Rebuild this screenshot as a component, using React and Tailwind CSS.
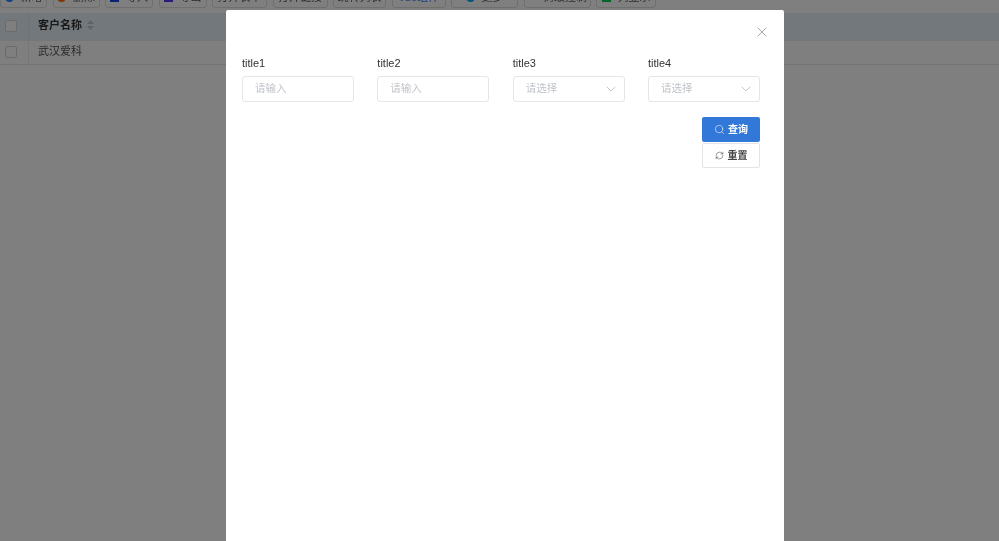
import React from "react";
import { Search, RefreshCw, ChevronDown, X } from "lucide-react";

const F = "[font-family:'Liberation_Sans','Noto_Sans_CJK_SC',sans-serif]";

function Tool({ icon, label, w, text = "text-[#5a5a5a]" }) {
  return (
    <div className={`h-[21px] ${w} shrink-0 flex items-center justify-center gap-[7px] rounded-[3px] border border-[#dedede] bg-white text-[11px] ${text}`}>
      {icon && <span className={`w-[9px] h-[9px] ${icon}`} />}
      <span>{label}</span>
    </div>
  );
}

function Field({ label, placeholder, select }) {
  return (
    <div className="w-[112px]">
      <div className="text-[11px] leading-[14px] text-[#333] mb-[6px]">{label}</div>
      <div className="h-[26px] rounded-[3px] border border-[#e4e6ec] flex items-center justify-between pl-[12px] pr-[5px] text-[10.5px] text-[#bfc3c9]">
        <span>{placeholder}</span>
        {select && <ChevronDown size={16} strokeWidth={1} className="text-[#a8abb0]" />}
      </div>
    </div>
  );
}

export default function App() {
  return (
    <div className={`relative h-[541px] w-[999px] overflow-hidden bg-white blur-[0.4px] ${F}`}>
      <div className="h-[13px] overflow-hidden">
        <div className="flex gap-[5.5px] -mt-[13px]">
          <Tool icon="rounded-full bg-blue-500" label="新增" w="w-[47px]" />
          <Tool icon="rounded-full bg-orange-500" label="删除" w="w-[47px]" />
          <Tool icon="bg-blue-700" label="导入" w="w-[48px]" />
          <Tool icon="bg-indigo-600" label="导出" w="w-[48px]" />
          <Tool label="打开表单" w="w-[55px]" />
          <Tool label="打开链接" w="w-[55px]" />
          <Tool label="跳转列表" w="w-[53px]" />
          <Tool label="Vue组件" w="w-[54px]" text="text-[#3b82f6]" />
          <Tool icon="rounded-full bg-sky-500" label="更多" w="w-[67px]" />
          <Tool icon="bg-red-400 scale-50" label="树级控制" w="w-[67px]" />
          <Tool icon="bg-green-500" label="列显示" w="w-[60px]" />
        </div>
      </div>
      <div className="h-[28px] flex items-stretch bg-[#e4f0f8] text-[11px] font-bold text-[#333]">
        <div className="w-[29px] pl-[5px] flex items-center border-r border-[#dde6ee]">
          <div className="w-[12px] h-[12px] -mt-[3px] border border-[#d5d5d5] bg-white rounded-[2px]" />
        </div>
        <div className="pl-[9px] pb-[4px] flex items-center gap-[5px]">
          客户名称
          <svg width="7" height="10" viewBox="0 0 7 10" fill="#c4c4c4"><path d="M3.5 0 7 4H0z" /><path d="M0 6h7l-3.5 4z" /></svg>
        </div>
      </div>
      <div className="h-[24px] flex items-stretch border-b border-[#e8e8e8] text-[11px] text-[#555]">
        <div className="w-[29px] pl-[5px] flex items-center border-r border-[#eee]">
          <div className="w-[12px] h-[12px] -mt-[2px] border border-[#d5d5d5] rounded-[2px]" />
        </div>
        <div className="pl-[9px] pb-[3px] flex items-center">武汉爱科</div>
      </div>

      <div className="absolute inset-0 bg-black/50" />

      <div className="absolute left-[226px] top-[10px] w-[558px] h-[540px] bg-white rounded-[2px] pl-[16px] pr-[24px] pt-[46px]">
        <X size={16} strokeWidth={1} className="absolute right-[14px] top-[14px] text-[#777]" />
        <div className="flex justify-between">
          <Field label="title1" placeholder="请输入" />
          <Field label="title2" placeholder="请输入" />
          <Field label="title3" placeholder="请选择" select />
          <Field label="title4" placeholder="请选择" select />
        </div>
        <div className="mt-[15px] flex flex-col items-end text-[10px] font-bold">
          <div className="w-[58px] h-[25px] rounded-[2px] bg-[#3278d8] text-white flex items-center justify-center gap-[3px]">
            <Search size={11} strokeWidth={1.2} />查询
          </div>
          <div className="mt-[1px] w-[58px] h-[25px] rounded-[2px] border border-[#e2e4ea] text-[#444] flex items-center justify-center gap-[4px]">
            <RefreshCw size={9} strokeWidth={1.4} />重置
          </div>
        </div>
      </div>
    </div>
  );
}
